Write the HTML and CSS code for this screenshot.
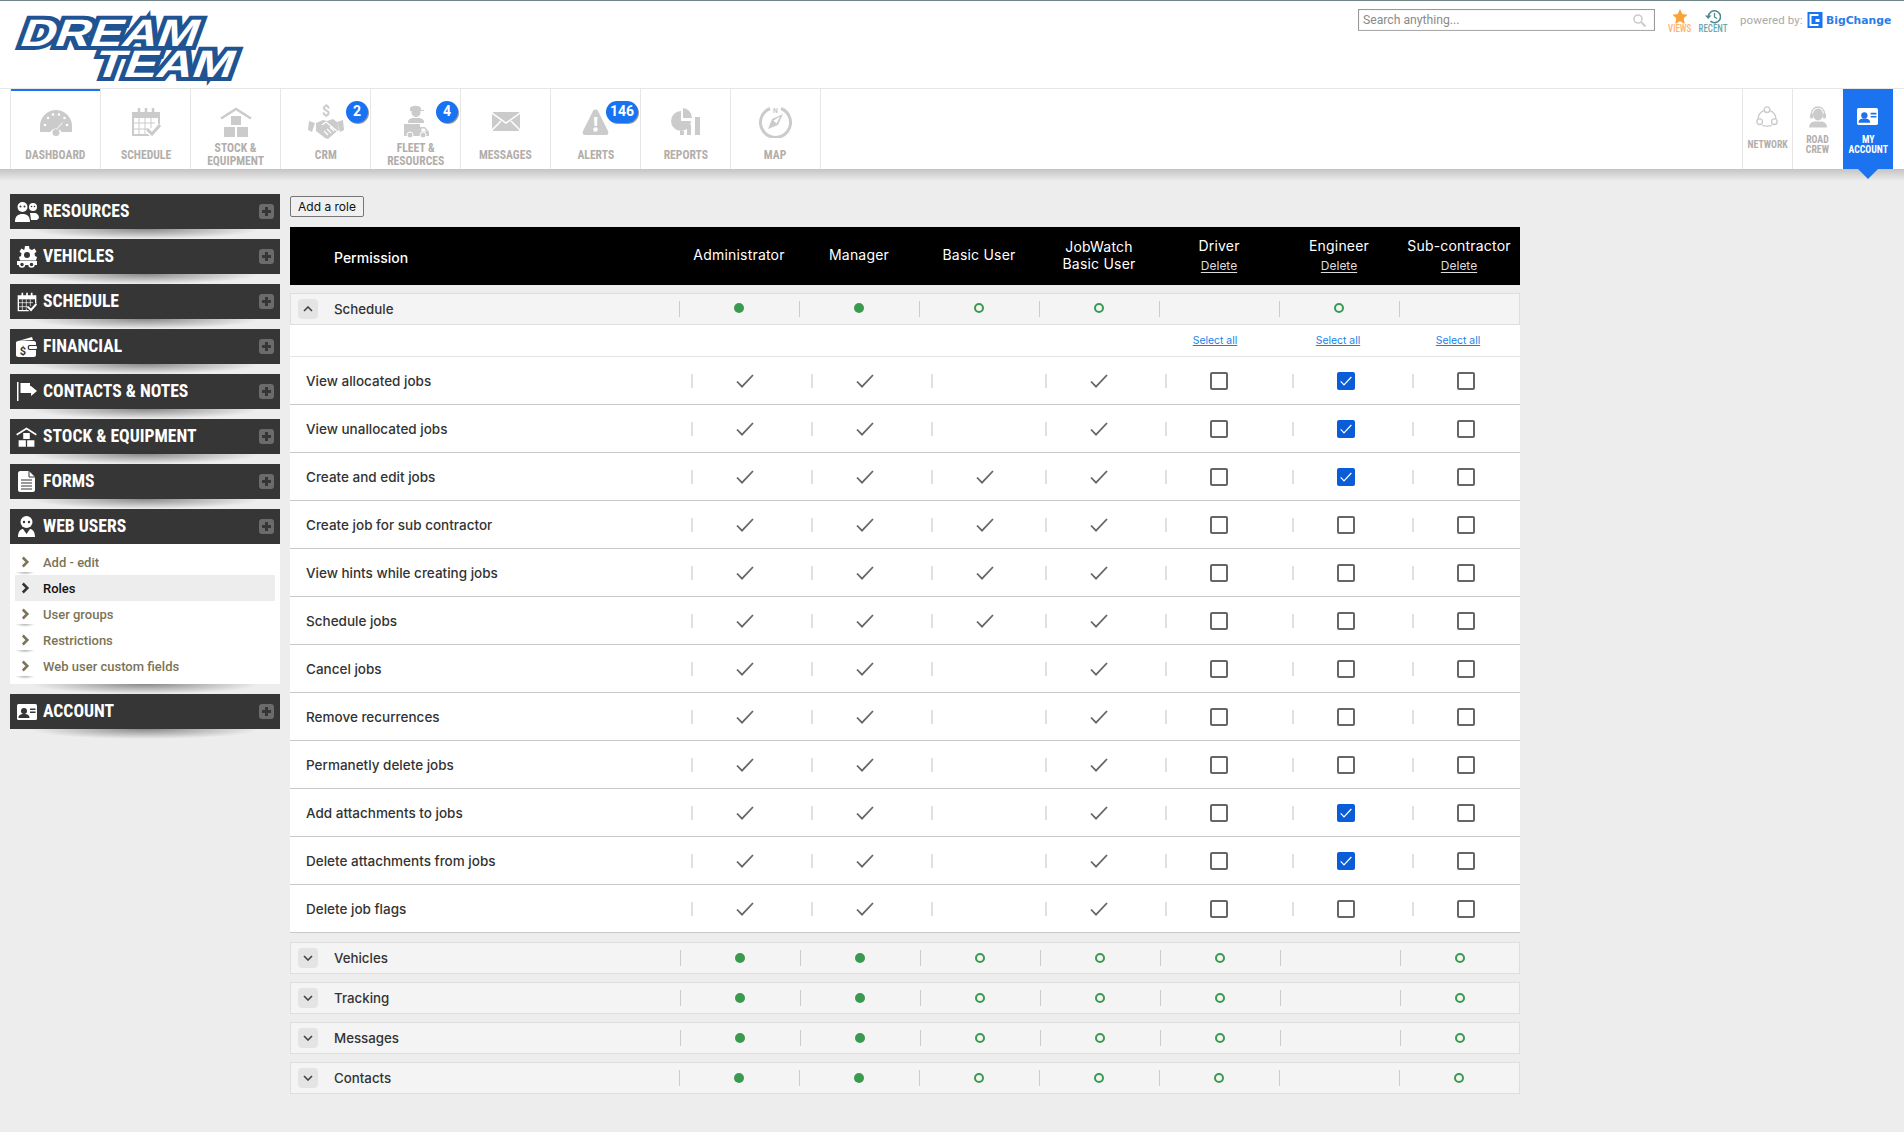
FILE: index.html
```html
<!DOCTYPE html>
<html lang="en">
<head>
<meta charset="utf-8">
<title>Roles</title>
<link rel="stylesheet" href="styles.css">
</head>
<body>
<svg class="defs" width="0" height="0" aria-hidden="true">
  <symbol id="i-gauge" viewBox="0 0 34 28"><path fill="currentColor" d="M1 24v-6a16 16 0 0 1 32 0v6H22.500a6 6 0 0 0-11 0z"/><circle cx="17" cy="24.500" r="3.500" fill="currentColor"/><path d="M18 22l6-7" stroke="currentColor" stroke-width="2.500"/><path d="M17.500 21.500l6-7" stroke="var(--hole)" stroke-width="1"/><g fill="var(--hole)"><circle cx="6" cy="17" r="1.300"/><circle cx="9" cy="10" r="1.300"/><circle cx="14" cy="6.500" r="1.300"/><circle cx="20" cy="6.500" r="1.300"/><circle cx="25.500" cy="10" r="1.300"/><circle cx="28" cy="17" r="1.300"/></g></symbol>
  <symbol id="i-cal" viewBox="0 0 30 30"><path fill="none" stroke="currentColor" stroke-width="2" d="M19 28H2V6h26v13"/><path fill="currentColor" d="M2 6h26v5H2z"/><path stroke="currentColor" stroke-width="2.500" d="M8 1v8M15 1v8M22 1v8"/><path stroke="currentColor" stroke-width="1" fill="none" d="M2 16h22M2 22h18M8 11v17M14 11v17M20 11v10"/><path fill="none" stroke="var(--hole)" stroke-width="6" d="M16 22l5 5 8-9"/><path fill="none" stroke="currentColor" stroke-width="3" d="M16 22l5 5 8-9"/></symbol>
  <symbol id="i-stock" viewBox="0 0 32 30"><path fill="none" stroke="currentColor" stroke-width="2.500" d="M1 11.500L16 2l15 9.500"/><path fill="currentColor" d="M11 9h10v9H11zM4 20h11v10H4zM17 20h11v10H17z"/></symbol>
  <symbol id="i-crm" viewBox="0 0 36 36"><path fill="currentColor" d="M1 17l6 2-3 9-4-2zM35 16l-6 2 3 10 4-2z" /><path fill="currentColor" d="M8 19l7-3 4 1 6-2 4 3 2 8-3 2-8 7-3-1-9-7z"/><path fill="none" stroke="var(--hole)" stroke-width="1.200" d="M14 21l4-3 11 9M16 27l4 4M19 25l4 4M22 23l4 4"/></symbol>
  <symbol id="i-fleet" viewBox="0 0 26 33"><path fill="currentColor" d="M7 3c2-3 9-3 11 0v2h3v1H7z"/><circle cx="13" cy="7.500" r="4.500" fill="currentColor"/><path fill="currentColor" d="M5 17c0-3 3-4 5-4h6c2 0 5 1 5 4v1H5z"/><path fill="currentColor" d="M1 19h16v3h5l4 5v4H1z"/><path fill="var(--hole)" d="M18.500 23.500h3l2 3h-5z"/><g fill="currentColor" stroke="var(--hole)" stroke-width="1"><circle cx="7" cy="30" r="3"/><circle cx="20" cy="30" r="3"/></g></symbol>
  <symbol id="i-mail" viewBox="0 0 28 19"><rect width="28" height="19" rx="2" fill="currentColor"/><path fill="none" stroke="var(--hole)" stroke-width="1.500" d="M0 1l14 10L28 1M0 18l9-9M28 18l-9-9"/></symbol>
  <symbol id="i-alert" viewBox="0 0 27 26"><path fill="currentColor" d="M11 2c1-2 4-2 5 0l10 20c1 2 0 4-2 4H3c-2 0-3-2-2-4z"/><path fill="var(--hole)" d="M12 8h3.500l-.5 9h-2.500z"/><circle cx="13.500" cy="20.500" r="2.200" fill="var(--hole)"/></symbol>
  <symbol id="i-reports" viewBox="0 0 29 27"><path fill="currentColor" d="M10 3v10h10a10 10 0 1 1-10-10z"/><path fill="currentColor" d="M12 0a10 10 0 0 1 9 10h-9zM9 23h4v4H9zM16 17h4v10h-4zM24 9h5v18h-5z"/></symbol>
  <symbol id="i-map" viewBox="0 0 33 33"><path fill="none" stroke="currentColor" stroke-width="3" d="M11 3.500a15 15 0 1 0 11 0"/><path fill="currentColor" d="M9 24l4-10 11-5-5 11zM14.500 15.500l3 3 3.500-7z"/></symbol>
  <symbol id="i-net" viewBox="0 0 21 21"><g fill="none" stroke="currentColor" stroke-width="1.300"><circle cx="10.500" cy="3.500" r="2.700"/><circle cx="3.500" cy="15" r="2.700"/><circle cx="17.500" cy="15" r="2.700"/><path d="M7.500 4.500a9 9 0 0 0-5.500 8M13.500 4.500a9 9 0 0 1 5.500 8M6 18.500c3 1 6 1 9 0"/></g></symbol>
  <symbol id="i-crew" viewBox="0 0 18 22"><path fill="none" stroke="currentColor" stroke-width="1.300" d="M2.500 10V8a6.500 6.500 0 0 1 13 0v2"/><ellipse cx="9" cy="9" rx="5" ry="6" fill="currentColor"/><rect x="1" y="8" width="3" height="5" rx="1" fill="currentColor"/><rect x="14" y="8" width="3" height="5" rx="1" fill="currentColor"/><path fill="currentColor" d="M0 22c0-4 3-6 6-6h6c3 0 6 2 6 6z"/></symbol>
  <symbol id="i-card" viewBox="0 0 20 16"><rect width="20" height="16" rx="1.500" fill="currentColor"/><circle cx="7" cy="7" r="3" fill="var(--hole)"/><path fill="var(--hole)" d="M1.500 14c0-3 2-4 5.500-4s5.500 1 5.500 4zM13 4.500h5.500V6H13zM13 7.500h5.500V9H13z"/></symbol>
  <symbol id="i-people" viewBox="0 0 24 20"><circle cx="7.500" cy="5" r="5" fill="currentColor"/><circle cx="18" cy="5" r="4" fill="currentColor"/><path fill="currentColor" d="M0 20c0-6 3-8 7.500-8s7.500 2 7.500 8zM15 11h4c3 0 5 2 5 5l-2 2h-6z"/><g fill="var(--hole)"><circle cx="5.500" cy="4.500" r="1"/><circle cx="9.500" cy="4.500" r="1"/><circle cx="16.500" cy="4.500" r=".8"/><circle cx="19.500" cy="4.500" r=".8"/></g></symbol>
  <symbol id="i-gear" viewBox="0 0 20 22"><path fill="currentColor" d="M8 0h4l.5 3 2.500 1 2.500-1.500 2 3-2 2 .5 2.500 2 1-1 3.500H3l-1-3.500 2-1 .5-2.500-2-2 2-3L7 4l.5-1z" /><circle cx="10" cy="9" r="3" fill="var(--hole)"/><path fill="currentColor" d="M0 15h20v4H0z"/><g fill="var(--hole)" stroke="currentColor" stroke-width="1.500"><circle cx="5" cy="18.500" r="2.500"/><circle cx="14.500" cy="18.500" r="2.500"/></g></symbol>
  <symbol id="i-wallet" viewBox="0 0 21 20"><path fill="currentColor" d="M2 4l14-4 1 3zM0 6c0-1 .5-2 2-2h16c1 0 2 1 2 2v2h-7a3 3 0 0 0 0 5h7v5c0 1-1 2-2 2H2c-1 0-2-1-2-2z"/><rect x="13" y="9" width="8" height="3" rx="1" fill="currentColor"/></symbol>
  <symbol id="i-flag" viewBox="0 0 20 19"><path fill="currentColor" d="M0 0h1.500v19H0zM3.500 1H13v3h1l6 5-6 5V11H3.500z"/></symbol>
  <symbol id="i-doc" viewBox="0 0 17 21"><path fill="currentColor" d="M2 0h9l6 6v13c0 1-1 2-2 2H2c-1 0-2-1-2-2V2c0-1 1-2 2-2z"/><path stroke="var(--hole)" stroke-width="1.200" d="M3 9h11M3 12h11M3 15h11M3 18h11"/><path stroke="var(--hole)" stroke-width="1" fill="none" d="M11 0v6h6"/></symbol>
  <symbol id="i-user" viewBox="0 0 17 21"><circle cx="8.500" cy="6" r="6" fill="currentColor"/><circle cx="6" cy="6" r="1.200" fill="var(--hole)"/><circle cx="11" cy="6" r="1.200" fill="var(--hole)"/><path fill="currentColor" d="M0 21c0-6 3-8 5-8l3.500 5 3.500-5c2 0 5 2 5 8z"/></symbol>
  <symbol id="i-check" viewBox="0 0 18 14"><path fill="none" stroke="currentColor" stroke-width="1.800" d="M1 7.500l5 5.200L17 1"/></symbol>
  <symbol id="i-chev" viewBox="0 0 10 12"><path fill="none" stroke="currentColor" stroke-width="2.800" d="M2 1l5 5-5 5"/></symbol>
  <symbol id="i-up" viewBox="0 0 10 6"><path fill="none" stroke="currentColor" stroke-width="1.600" d="M1 5l4-4 4 4"/></symbol>
  <symbol id="i-down" viewBox="0 0 10 6"><path fill="none" stroke="currentColor" stroke-width="1.600" d="M1 1l4 4 4-4"/></symbol>
</svg>

<header class="top">
  <a class="logo" aria-label="Dream Team">
    <svg width="236" height="76" viewBox="0 0 236 76">
      <g transform="skewX(-20)" class="logo-text">
        <text x="21" y="36" textLength="177" lengthAdjust="spacingAndGlyphs">DREAM</text>
        <text x="106" y="67" textLength="139" lengthAdjust="spacingAndGlyphs">TEAM</text>
      </g>
    </svg>
  </a>
  <div class="tools">
    <label class="search"><span class="placeholder">Search anything...</span>
      <svg width="13" height="13" viewBox="0 0 13 13"><circle cx="5" cy="5" r="4" fill="none" stroke="#ccc" stroke-width="1.600"/><path d="M8 8l4.500 4.500" stroke="#ccc" stroke-width="2"/></svg>
    </label>
    <div class="quick views">
      <svg width="16" height="15" viewBox="0 0 24 24"><path fill="currentColor" d="M12 0l3.700 8 8.300 1-6 5.800L19.500 24 12 19.500 4.500 24 6 14.800 0 9l8.300-1z"/></svg>
      <span class="cond">VIEWS</span>
    </div>
    <div class="quick recent">
      <svg width="16" height="15" viewBox="0 0 16 15"><path fill="none" stroke="currentColor" stroke-width="1.600" d="M3.500 7.500a6 6 0 1 1 2 4.700"/><path fill="currentColor" d="M0 6.500h6.500L3.200 10z"/><path fill="none" stroke="currentColor" stroke-width="1.300" d="M9.500 4v4l2.500 1.500"/></svg>
      <span class="cond">RECENT</span>
    </div>
    <div class="powered">
      <span class="powered-label">powered by:</span>
      <svg width="16" height="16" viewBox="0 0 15 16"><path fill="#1a73f0" d="M0 0h15v16H0z"/><path fill="none" stroke="#fff" stroke-width="2" d="M11 3H3v10h8"/><path fill="#fff" d="M8 7h4v3H8z"/></svg>
      <span class="bigchange">BigChange</span>
    </div>
  </div>
</header>

<nav class="nav">
  <a class="nav-item is-current"><span class="nav-icon"><svg width="34" height="28"><use href="#i-gauge"/></svg></span><span class="nav-label"><span class="cond">DASHBOARD</span></span></a>
  <a class="nav-item"><span class="nav-icon"><svg width="30" height="30"><use href="#i-cal"/></svg></span><span class="nav-label"><span class="cond">SCHEDULE</span></span></a>
  <a class="nav-item"><span class="nav-icon"><svg width="32" height="30"><use href="#i-stock"/></svg></span><span class="nav-label"><span class="cond">STOCK &amp;<br>EQUIPMENT</span></span></a>
  <a class="nav-item"><span class="nav-icon"><svg width="36" height="36" viewBox="0 0 36 36"><use href="#i-crm" width="36" height="36"/><text x="18" y="12" text-anchor="middle" class="svg-dollar">$</text></svg></span><span class="nav-label"><span class="cond">CRM</span></span><span class="badge">2</span></a>
  <a class="nav-item"><span class="nav-icon"><svg width="26" height="33"><use href="#i-fleet"/></svg></span><span class="nav-label"><span class="cond">FLEET &amp;<br>RESOURCES</span></span><span class="badge">4</span></a>
  <a class="nav-item"><span class="nav-icon"><svg width="28" height="19"><use href="#i-mail"/></svg></span><span class="nav-label"><span class="cond">MESSAGES</span></span></a>
  <a class="nav-item"><span class="nav-icon"><svg width="27" height="26"><use href="#i-alert"/></svg></span><span class="nav-label"><span class="cond">ALERTS</span></span><span class="badge badge-wide">146</span></a>
  <a class="nav-item"><span class="nav-icon"><svg width="29" height="27"><use href="#i-reports"/></svg></span><span class="nav-label"><span class="cond">REPORTS</span></span></a>
  <a class="nav-item nav-last"><span class="nav-icon"><svg width="33" height="33" viewBox="0 0 33 33"><use href="#i-map" width="33" height="33"/><text x="16.500" y="8" text-anchor="middle" class="svg-n">N</text></svg></span><span class="nav-label"><span class="cond">MAP</span></span></a>
  <div class="nav-right">
    <a class="side-item"><span class="side-icon"><svg width="22" height="22"><use href="#i-net"/></svg></span><span class="side-label"><span class="cond">NETWORK</span></span></a>
    <a class="side-item"><span class="side-icon"><svg width="18" height="23"><use href="#i-crew"/></svg></span><span class="side-label"><span class="cond">ROAD<br>CREW</span></span></a>
    <a class="side-item is-active"><span class="side-icon"><svg width="21" height="17"><use href="#i-card"/></svg></span><span class="side-label"><span class="cond">MY<br>ACCOUNT</span></span></a>
  </div>
</nav>
<div class="nav-shadow"></div>

<div class="page">
  <aside class="sidebar">
    <section class="menu"><div class="menu-head"><svg width="24" height="20"><use href="#i-people"/></svg><span class="cond">RESOURCES</span><i class="plus"></i></div></section>
    <section class="menu"><div class="menu-head"><svg width="20" height="22"><use href="#i-gear"/></svg><span class="cond">VEHICLES</span><i class="plus"></i></div></section>
    <section class="menu"><div class="menu-head"><svg width="20" height="20"><use href="#i-cal"/></svg><span class="cond">SCHEDULE</span><i class="plus"></i></div></section>
    <section class="menu"><div class="menu-head"><svg width="21" height="20" viewBox="0 0 21 20"><use href="#i-wallet" width="21" height="20"/><text x="7" y="17.500" text-anchor="middle" class="svg-wallet">$</text></svg><span class="cond">FINANCIAL</span><i class="plus"></i></div></section>
    <section class="menu"><div class="menu-head"><svg width="20" height="19"><use href="#i-flag"/></svg><span class="cond">CONTACTS &amp; NOTES</span><i class="plus"></i></div></section>
    <section class="menu"><div class="menu-head"><svg width="21" height="20"><use href="#i-stock"/></svg><span class="cond">STOCK &amp; EQUIPMENT</span><i class="plus"></i></div></section>
    <section class="menu"><div class="menu-head"><svg width="17" height="21"><use href="#i-doc"/></svg><span class="cond">FORMS</span><i class="plus"></i></div></section>
    <section class="menu"><div class="menu-head"><svg width="17" height="21"><use href="#i-user"/></svg><span class="cond">WEB USERS</span><i class="plus"></i></div>
      <ul class="sub">
        <li><svg width="9" height="12"><use href="#i-chev"/></svg>Add - edit</li>
        <li class="is-on"><svg width="9" height="12"><use href="#i-chev"/></svg>Roles</li>
        <li><svg width="9" height="12"><use href="#i-chev"/></svg>User groups</li>
        <li><svg width="9" height="12"><use href="#i-chev"/></svg>Restrictions</li>
        <li><svg width="9" height="12"><use href="#i-chev"/></svg>Web user custom fields</li>
      </ul>
    </section>
    <section class="menu"><div class="menu-head"><svg width="22" height="16"><use href="#i-card"/></svg><span class="cond">ACCOUNT</span><i class="plus"></i></div></section>
  </aside>

  <main class="content">
    <button class="add-role" type="button">Add a role</button>
    <div class="thead">
      <div class="th-perm">Permission</div>
      <div class="th">Administrator</div>
      <div class="th">Manager</div>
      <div class="th">Basic User</div>
      <div class="th th-two">JobWatch<br>Basic User</div>
      <div class="th th-del">Driver<a>Delete</a></div>
      <div class="th th-del">Engineer<a>Delete</a></div>
      <div class="th th-del">Sub-contractor<a>Delete</a></div>
    </div>

    <div class="group group-open">
      <div class="group-name"><span class="toggle"><svg width="10" height="6"><use href="#i-up"/></svg></span>Schedule</div>
      <div class="gc"><i class="dot"></i></div><div class="gc"><i class="dot"></i></div><div class="gc"><i class="ring"></i></div><div class="gc"><i class="ring"></i></div><div class="gc"></div><div class="gc"><i class="ring"></i></div><div class="gc"></div>
    </div>
    <div class="select-row"><a>Select all</a><a>Select all</a><a>Select all</a></div>

    <div class="row"><div class="name">View allocated jobs</div><div class="c"><svg class="tick"><use href="#i-check"/></svg></div><div class="c"><svg class="tick"><use href="#i-check"/></svg></div><div class="c"></div><div class="c"><svg class="tick"><use href="#i-check"/></svg></div><div class="c"><i class="box"></i></div><div class="c"><i class="box on"><svg><use href="#i-check"/></svg></i></div><div class="c"><i class="box"></i></div></div>
    <div class="row"><div class="name">View unallocated jobs</div><div class="c"><svg class="tick"><use href="#i-check"/></svg></div><div class="c"><svg class="tick"><use href="#i-check"/></svg></div><div class="c"></div><div class="c"><svg class="tick"><use href="#i-check"/></svg></div><div class="c"><i class="box"></i></div><div class="c"><i class="box on"><svg><use href="#i-check"/></svg></i></div><div class="c"><i class="box"></i></div></div>
    <div class="row"><div class="name">Create and edit jobs</div><div class="c"><svg class="tick"><use href="#i-check"/></svg></div><div class="c"><svg class="tick"><use href="#i-check"/></svg></div><div class="c"><svg class="tick"><use href="#i-check"/></svg></div><div class="c"><svg class="tick"><use href="#i-check"/></svg></div><div class="c"><i class="box"></i></div><div class="c"><i class="box on"><svg><use href="#i-check"/></svg></i></div><div class="c"><i class="box"></i></div></div>
    <div class="row"><div class="name">Create job for sub contractor</div><div class="c"><svg class="tick"><use href="#i-check"/></svg></div><div class="c"><svg class="tick"><use href="#i-check"/></svg></div><div class="c"><svg class="tick"><use href="#i-check"/></svg></div><div class="c"><svg class="tick"><use href="#i-check"/></svg></div><div class="c"><i class="box"></i></div><div class="c"><i class="box"></i></div><div class="c"><i class="box"></i></div></div>
    <div class="row"><div class="name">View hints while creating jobs</div><div class="c"><svg class="tick"><use href="#i-check"/></svg></div><div class="c"><svg class="tick"><use href="#i-check"/></svg></div><div class="c"><svg class="tick"><use href="#i-check"/></svg></div><div class="c"><svg class="tick"><use href="#i-check"/></svg></div><div class="c"><i class="box"></i></div><div class="c"><i class="box"></i></div><div class="c"><i class="box"></i></div></div>
    <div class="row"><div class="name">Schedule jobs</div><div class="c"><svg class="tick"><use href="#i-check"/></svg></div><div class="c"><svg class="tick"><use href="#i-check"/></svg></div><div class="c"><svg class="tick"><use href="#i-check"/></svg></div><div class="c"><svg class="tick"><use href="#i-check"/></svg></div><div class="c"><i class="box"></i></div><div class="c"><i class="box"></i></div><div class="c"><i class="box"></i></div></div>
    <div class="row"><div class="name">Cancel jobs</div><div class="c"><svg class="tick"><use href="#i-check"/></svg></div><div class="c"><svg class="tick"><use href="#i-check"/></svg></div><div class="c"></div><div class="c"><svg class="tick"><use href="#i-check"/></svg></div><div class="c"><i class="box"></i></div><div class="c"><i class="box"></i></div><div class="c"><i class="box"></i></div></div>
    <div class="row"><div class="name">Remove recurrences</div><div class="c"><svg class="tick"><use href="#i-check"/></svg></div><div class="c"><svg class="tick"><use href="#i-check"/></svg></div><div class="c"></div><div class="c"><svg class="tick"><use href="#i-check"/></svg></div><div class="c"><i class="box"></i></div><div class="c"><i class="box"></i></div><div class="c"><i class="box"></i></div></div>
    <div class="row"><div class="name">Permanetly delete jobs</div><div class="c"><svg class="tick"><use href="#i-check"/></svg></div><div class="c"><svg class="tick"><use href="#i-check"/></svg></div><div class="c"></div><div class="c"><svg class="tick"><use href="#i-check"/></svg></div><div class="c"><i class="box"></i></div><div class="c"><i class="box"></i></div><div class="c"><i class="box"></i></div></div>
    <div class="row"><div class="name">Add attachments to jobs</div><div class="c"><svg class="tick"><use href="#i-check"/></svg></div><div class="c"><svg class="tick"><use href="#i-check"/></svg></div><div class="c"></div><div class="c"><svg class="tick"><use href="#i-check"/></svg></div><div class="c"><i class="box"></i></div><div class="c"><i class="box on"><svg><use href="#i-check"/></svg></i></div><div class="c"><i class="box"></i></div></div>
    <div class="row"><div class="name">Delete attachments from jobs</div><div class="c"><svg class="tick"><use href="#i-check"/></svg></div><div class="c"><svg class="tick"><use href="#i-check"/></svg></div><div class="c"></div><div class="c"><svg class="tick"><use href="#i-check"/></svg></div><div class="c"><i class="box"></i></div><div class="c"><i class="box on"><svg><use href="#i-check"/></svg></i></div><div class="c"><i class="box"></i></div></div>
    <div class="row"><div class="name">Delete job flags</div><div class="c"><svg class="tick"><use href="#i-check"/></svg></div><div class="c"><svg class="tick"><use href="#i-check"/></svg></div><div class="c"></div><div class="c"><svg class="tick"><use href="#i-check"/></svg></div><div class="c"><i class="box"></i></div><div class="c"><i class="box"></i></div><div class="c"><i class="box"></i></div></div>

    <div class="group group-closed shifted">
      <div class="group-name"><span class="toggle"><svg width="10" height="6"><use href="#i-down"/></svg></span>Vehicles</div>
      <div class="gc"><i class="dot"></i></div><div class="gc"><i class="dot"></i></div><div class="gc"><i class="ring"></i></div><div class="gc"><i class="ring"></i></div><div class="gc"><i class="ring"></i></div><div class="gc"></div><div class="gc"><i class="ring"></i></div>
    </div>
    <div class="group group-closed shifted">
      <div class="group-name"><span class="toggle"><svg width="10" height="6"><use href="#i-down"/></svg></span>Tracking</div>
      <div class="gc"><i class="dot"></i></div><div class="gc"><i class="dot"></i></div><div class="gc"><i class="ring"></i></div><div class="gc"><i class="ring"></i></div><div class="gc"><i class="ring"></i></div><div class="gc"></div><div class="gc"><i class="ring"></i></div>
    </div>
    <div class="group group-closed shifted">
      <div class="group-name"><span class="toggle"><svg width="10" height="6"><use href="#i-down"/></svg></span>Messages</div>
      <div class="gc"><i class="dot"></i></div><div class="gc"><i class="dot"></i></div><div class="gc"><i class="ring"></i></div><div class="gc"><i class="ring"></i></div><div class="gc"><i class="ring"></i></div><div class="gc"></div><div class="gc"><i class="ring"></i></div>
    </div>
    <div class="group group-closed">
      <div class="group-name"><span class="toggle"><svg width="10" height="6"><use href="#i-down"/></svg></span>Contacts</div>
      <div class="gc"><i class="dot"></i></div><div class="gc"><i class="dot"></i></div><div class="gc"><i class="ring"></i></div><div class="gc"><i class="ring"></i></div><div class="gc"><i class="ring"></i></div><div class="gc"></div><div class="gc"><i class="ring"></i></div>
    </div>
  </main>
</div>
</body>
</html>
```

FILE: styles.css
```css
* { box-sizing: border-box; }
html, body { margin: 0; padding: 0; height: 1132px; overflow: hidden; }
body { background: #ededed; font-family: Roboto, "Liberation Sans", sans-serif; color: #333; }
.defs { display: block; height: 0; }
i { font-style: normal; display: block; }
a { text-decoration: none; }

.cond {
  display: inline-block;
  font-family: Roboto, "Liberation Sans", sans-serif;
  font-stretch: condensed;
  font-weight: 700;
  transform: scaleX(.93);
  white-space: nowrap;
}

/* top strip */
.top {
  height: 88px;
  background: #fff;
  border-top: 1px solid #708487;
  display: flex;
  justify-content: space-between;
}
.logo { display: block; margin: 9px 0 0 10px; height: 76px; }
.logo-text text {
  font-family: "Liberation Sans", sans-serif;
  font-weight: 700;
  font-size: 38px;
  fill: #fff;
  stroke: #1f5392;
  stroke-width: 8px;
  paint-order: stroke;
  stroke-linejoin: miter;
}
.tools { display: flex; align-items: flex-start; padding: 8px 0 0; }
.search {
  width: 297px;
  height: 22px;
  border: 1px solid #999;
  border-bottom-color: #aaa;
  box-shadow: inset 0 0 1px #bbb;
  display: flex;
  align-items: center;
  justify-content: space-between;
  padding: 0 8px 0 4px;
  font-size: 12.200px;
  color: #8a8a8a;
}
.quick { display: flex; flex-direction: column; align-items: center; font-size: 10.500px; width: 30px; }
.quick .cond { line-height: 11px; margin-top: -1px; font-weight: 500; transform: scaleX(.85); }
.views { margin-left: 10px; color: #f9a33b; }
.views .cond { color: #fbb26c; }
.recent { margin-left: 3px; color: #4d8a8c; }
.recent .cond { color: #6ea6aa; }
.powered { display: flex; align-items: center; margin: 3px 0 0 12px; width: 164px; }
.powered-label { font-size: 11.500px; color: #a9a9a9; width: 67px; letter-spacing: .1px; white-space: nowrap; }
.bigchange { font-family: "DejaVu Sans", sans-serif; font-weight: 700; font-size: 10.800px; color: #2a7de8; margin-left: 3px; white-space: nowrap; }

/* main nav */
.nav {
  height: 81px;
  background: #fff;
  border-top: 1px solid #e6e6e6;
  display: flex;
  padding-left: 10px;
}
.nav-item {
  position: relative;
  width: 90px;
  border-left: 1px solid #e6e6e6;
  color: #cbcbcb;
  --hole: #fff;
  display: flex;
  flex-direction: column;
}
.nav-last { width: 91px; border-right: 1px solid #e6e6e6; }
.nav-item.is-current { box-shadow: inset 0 2px 0 #1b73f0; }
.nav-icon { height: 52px; padding-top: 13px; display: flex; align-items: center; justify-content: center; }
.nav-icon svg, .side-icon svg { display: block; }
.nav-label {
  height: 27px;
  padding-bottom: 1px;
  display: flex;
  align-items: center;
  justify-content: center;
  text-align: center;
  font-size: 12.500px;
  line-height: 13px;
  color: #b2aeab;
}
.badge {
  position: absolute;
  top: 12px;
  left: 65px;
  width: 22px;
  height: 22px;
  border-radius: 11px;
  background: #1873f3;
  color: #fff;
  font-weight: 700;
  font-size: 14px;
  line-height: 21px;
  text-align: center;
  box-shadow: 1px 1px 0 #9a9a9a;
}
.badge-wide { left: 55px; width: 32px; }
.nav-right { margin-left: auto; display: flex; margin-right: 11px; }
.side-item { width: 50.500px; border-left: 1px solid #e6e6e6; color: #cbcbcb; --hole: #fff; display: flex; flex-direction: column; }
.side-icon { height: 47px; padding-top: 8px; display: flex; align-items: center; justify-content: center; }
.side-label { height: 29px; margin-top: -6px; display: flex; align-items: center; justify-content: center; text-align: center; font-size: 10.500px; line-height: 10px; color: #b2aeab; }
.side-item.is-active { position: relative; background: #1b73f0; border-left: 0; color: #fff; --hole: #1b73f0; }
.side-item.is-active .side-label { color: #fff; }
.side-item.is-active::after {
  content: "";
  position: absolute;
  left: 15px;
  bottom: -10px;
  border-left: 10px solid transparent;
  border-right: 10px solid transparent;
  border-top: 10px solid #1b73f0;
}
.nav-shadow { height: 12px; background: linear-gradient(#c4c4c4, #ededed); }

/* page */
.page { display: flex; padding-left: 10px; }
.sidebar { width: 270px; padding-top: 13px; flex: none; }
.menu { position: relative; margin-bottom: 10px; }
.menu::after {
  content: "";
  position: absolute;
  left: 20px;
  right: 20px;
  bottom: -10px;
  height: 10px;
  background: radial-gradient(ellipse 50% 100% at 50% 0, rgba(0,0,0,.42), rgba(0,0,0,0));
}
.menu-head {
  height: 35px;
  background: #363636;
  color: #fff;
  --hole: #363636;
  display: grid;
  grid-template-columns: 33px 1fr 15px;
  align-items: center;
  justify-items: center;
  padding-right: 6px;
  font-size: 17.600px;
}
.menu-head .cond { justify-self: start; transform-origin: 0 50%; transform: none; margin-top: -1px; }
.plus { position: relative; width: 15px; height: 15px; border-radius: 3px; background: #6b6b6b; }
.plus::before, .plus::after { content: ""; position: absolute; background: #363636; }
.plus::before { left: 3px; right: 3px; top: 6px; height: 3px; }
.plus::after { top: 3px; bottom: 3px; left: 6px; width: 3px; }
.sub { list-style: none; margin: 0; padding: 5px 5px 5px; background: #fff; }
.sub li {
  position: relative;
  height: 26px;
  display: flex;
  align-items: center;
  font-size: 13px;
  font-weight: 500;
  color: #7b7458;
}
.sub li svg { margin: 0 13px 0 6px; flex: none; }
.sub li::after {
  content: "";
  position: absolute;
  left: 0;
  top: 23px;
  width: 20px;
  height: 3px;
  background: radial-gradient(ellipse 50% 100% at 50% 0, rgba(0,0,0,.3), rgba(0,0,0,0));
}
.sub li.is-on { background: #ededed; color: #111; }
.sub li.is-on::after { display: none; }
.sub li.is-on svg { color: #333; }

/* content */
.content { width: 1230px; margin-left: 10px; padding-top: 15px; font-family: Inter, "Liberation Sans", sans-serif; }
.add-role {
  display: block;
  width: 74px;
  height: 21px;
  padding: 0;
  background: #f0f0f0;
  border: 1px solid #767676;
  border-radius: 2px;
  font: 400 12px Inter, "Liberation Sans", sans-serif;
  color: #111;
}
.thead {
  margin-top: 10px;
  height: 58px;
  background: #000;
  color: #fff;
  display: grid;
  grid-template-columns: 389px repeat(7, 120px);
  align-items: center;
  font-size: 14px;
}
.th-perm { padding: 3px 0 0 44px; font-weight: 500; }
.th { text-align: center; line-height: 17px; padding-bottom: 4px; letter-spacing: .2px; }
.th-two { padding-bottom: 2px; }
.th-del { padding-bottom: 3px; display: flex; flex-direction: column; align-items: center; line-height: 17px; }
.th-del a { font-size: 12px; line-height: 15px; margin-top: 4px; color: #ddd; text-decoration: underline; text-underline-offset: 2px; letter-spacing: 0; }

.group {
  margin-top: 8px;
  height: 32px;
  background: #f4f4f4;
  border: 1px solid #dedede;
  display: grid;
  grid-template-columns: 388px repeat(7, 120px);
  align-items: center;
}
.group.shifted { grid-template-columns: 389px repeat(7, 120px); }
.row + .group-closed { margin-top: 9px; }
.group-name { display: flex; align-items: center; font-size: 13.300px; font-weight: 500; color: #333; }
.toggle {
  width: 20px;
  height: 20px;
  margin: 0 16px 0 7px;
  background: #e4e4e4;
  border-radius: 4px;
  display: flex;
  align-items: center;
  justify-content: center;
  color: #444;
}
.gc { height: 16px; border-left: 1px solid #ccc; display: flex; align-items: center; justify-content: center; padding: 0 2px 1px 0; }
.group-open .gc { padding-bottom: 3px; }
.dot { width: 10px; height: 10px; border-radius: 50%; background: #3b9a4f; }
.ring { width: 10px; height: 10px; border-radius: 50%; border: 2px solid #3b9a4f; }

.select-row {
  height: 32px;
  background: #fff;
  border-bottom: 1px solid #e4e4e4;
  display: grid;
  grid-template-columns: 867px 123px 120px 120px;
  align-items: center;
  font-size: 10.400px;
}
.select-row a:first-child { grid-column: 2; }
.select-row a { text-align: center; color: #1a7fe8; text-decoration: underline; }
.select-row a:nth-child(1) { padding-right: 7px; }
.select-row a:nth-child(2) { padding-right: 4px; }
.select-row a:nth-child(3) { padding-right: 4px; }

.row {
  height: 48px;
  background: #fff;
  border-bottom: 1px solid #c9c9c9;
  display: grid;
  grid-template-columns: 401px 120px 120px 114px 120px 127px 120px 108px;
  align-items: center;
}
.name { padding-left: 16px; font-size: 13.500px; font-weight: 500; color: #333; }
.c { height: 14px; border-left: 2px solid #e0e0e0; display: flex; align-items: center; justify-content: center; padding-right: 14px; }
.c:nth-child(4) { padding-right: 8px; }
.c:nth-child(6) { padding-right: 21px; }
.c:nth-child(8) { padding-right: 2px; }
.tick { width: 18px; height: 14px; color: #666; flex: none; }
.box { width: 18px; height: 18px; flex: none; border: 2px solid #666; border-radius: 2px; }
.box.on { background: #0b5cd9; border-color: #0b5cd9; color: #fff; display: flex; align-items: center; justify-content: center; }
.box.on svg { width: 12px; height: 10px; }

.svg-dollar { font: 700 14px Roboto, sans-serif; fill: currentColor; }
.svg-n { font: 700 7px Roboto, sans-serif; fill: currentColor; }
.svg-wallet { font: 700 11px Roboto, sans-serif; fill: var(--hole); }
```
